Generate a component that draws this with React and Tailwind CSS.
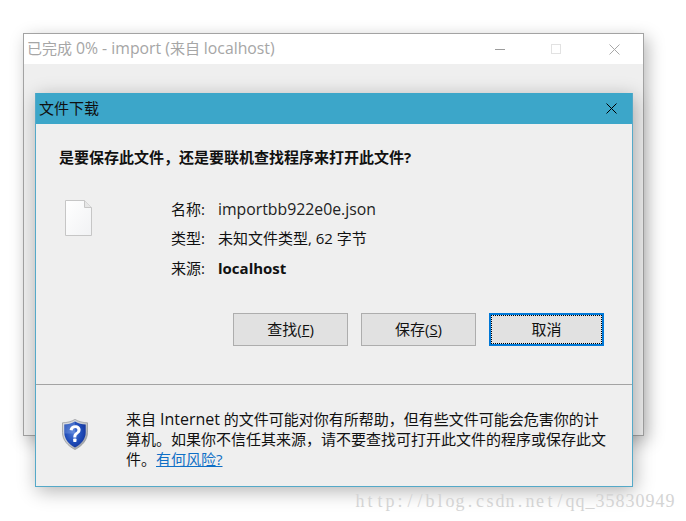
const FONT = '[font-family:"Open_Sans","Noto_Sans_CJK_SC",sans-serif]';
const WATERMARK = "http://blog.csdn.net/qq_35830949";

const CloseIcon = ({ color, className }) => (
  <svg width="11" height="11" viewBox="0 0 11 11" className={className}>
    <path d="M0.5 0.5L10.5 10.5M10.5 0.5L0.5 10.5" stroke={color} strokeWidth="1" fill="none" />
  </svg>
);

const FileIcon = () => (
  <svg width="27" height="36" viewBox="0 0 27 36">
    <defs>
      <linearGradient id="page" x1="0" y1="0" x2="1" y2="1">
        <stop offset="0" stopColor="#ffffff" />
        <stop offset="1" stopColor="#f1f2f4" />
      </linearGradient>
    </defs>
    <path d="M0.5 0.5H19.5L26.5 7.5V35.5H0.5Z" fill="url(#page)" stroke="#c6c6c6" />
    <path d="M19.5 0.5V7.5H26.5" fill="#e6e6e6" stroke="#c6c6c6" />
  </svg>
);

const ShieldIcon = () => (
  <svg width="26" height="31" viewBox="0 0 26 31">
    <defs>
      <linearGradient id="rim" x1="0" y1="0" x2="1" y2="1">
        <stop offset="0" stopColor="#dfe3e8" />
        <stop offset="0.55" stopColor="#c3c6ca" />
        <stop offset="1" stopColor="#8a8d92" />
      </linearGradient>
      <radialGradient id="blue" cx="0.42" cy="0.42" r="0.7">
        <stop offset="0" stopColor="#4f7ad8" />
        <stop offset="0.55" stopColor="#1f4cb8" />
        <stop offset="1" stopColor="#122f96" />
      </radialGradient>
    </defs>
    <path d="M13 0.4C9.5 2.6 5 3.7 0.5 3.8V13.5C0.5 21 5.8 26.8 13 30.6C20.2 26.8 25.5 21 25.5 13.5V3.8C21 3.7 16.5 2.6 13 0.4Z" fill="url(#rim)" stroke="#8f9297" strokeWidth="0.7" />
    <path d="M13 2.4C10 4.2 6 5.3 2.3 5.5V13.5C2.3 20 6.8 25.2 13 28.5C19.2 25.2 23.7 20 23.7 13.5V5.5C20 5.3 16 4.2 13 2.4Z" fill="url(#blue)" />
    <path d="M2.3 5.5C6 5.3 10 4.2 13 2.4V14.5H2.3Z" fill="#9fb9ee" fillOpacity="0.28" />
    <path d="M7.6 11C8 7.8 10.2 6.2 13.2 6.2C16.4 6.2 18.6 8 18.6 10.7C18.6 12.9 17.4 14 15.8 15.2C14.6 16.1 14.3 16.8 14.3 18.4H11.3C11.3 16 11.9 14.8 13.5 13.6C14.8 12.6 15.4 12 15.4 10.9C15.4 9.8 14.6 9 13.1 9C11.7 9 10.8 9.9 10.7 11.4Z" fill="#ffffff" />
    <rect x="11.2" y="19.6" width="3.3" height="3.3" rx="0.7" fill="#ffffff" />
  </svg>
);

const Row = ({ label, children }) => (
  <div className="flex h-[29.5px] items-center">
    <span className="w-[47px]">{label}</span>
    {children}
  </div>
);

const Btn = ({ children, focused }) => (
  <button
    className={
      focused
        ? "flex h-[33px] w-[115px] items-center justify-center border-2 border-[#0078d7] bg-[#e1e1e1] outline-1 -outline-offset-3 outline-dotted outline-black"
        : "flex h-[33px] w-[115px] items-center justify-center border border-[#adadad] bg-[#e1e1e1]"
    }
  >
    {children}
  </button>
);

export default function App() {
  return (
    <div className={`relative h-[521px] w-[686px] overflow-hidden bg-white text-[15px] leading-5 text-[#111] ${FONT}`}>
      {/* browser window behind the dialog */}
      <div className="absolute left-[23px] top-[33px] flex h-[403px] w-[621px] flex-col border border-[#a3a3a3] bg-[#efefef] shadow-[4px_5px_16px_rgba(0,0,0,0.28)]">
        <div className="flex h-[30px] items-center bg-white pb-[3px] pl-[3px] text-[#a6a6a6]">
          <span className="flex-1">
            已完成 <span className="text-[15.8px]">0% - import (</span>来自 <span className="text-[15.8px]">localhost)</span>
          </span>
          <span className="mr-[46px] mt-[3px] h-px w-[10px] bg-[#9c9c9c]" />
          <span className="mr-[48px] mt-[3px] h-[10px] w-[10px] border border-[#e2e2e2]" />
          <CloseIcon color="#a8a8a8" className="mr-[23px] mt-[3px]" />
        </div>
      </div>

      {/* file download dialog */}
      <div className="absolute left-[35px] top-[93px] flex h-[394px] w-[598px] flex-col border border-t-0 border-[#55a9c8] bg-[#efefef] shadow-[2px_4px_18px_rgba(0,0,0,0.3)]">
        <div className="flex h-[31px] shrink-0 items-center bg-[#3ca6c9] pb-[2px] pl-[3px] text-[#101010]">
          <span className="flex-1">文件下载</span>
          <CloseIcon color="#000000" className="mr-[15px] mt-[2px]" />
        </div>

        <div className="pl-[23px] pt-[23px] font-bold leading-5">是要保存此文件，还是要联机查找程序来打开此文件?</div>

        <div className="mt-[27px] flex">
          <div className="ml-[29px] mt-[6px] w-[106px]">
            <FileIcon />
          </div>
          <div className="flex flex-col">
            <Row label="名称:">
              <span className="text-[15.8px] text-[#222]">importbb922e0e.json</span>
            </Row>
            <Row label="类型:">
              <span>未知文件类型, 62 字节</span>
            </Row>
            <Row label="来源:">
              <span className="font-bold">localhost</span>
            </Row>
          </div>
        </div>

        <div className="mt-[30px] flex justify-end gap-[13px] pr-[28px]">
          <Btn>
            查找(<span className="underline">F</span>)
          </Btn>
          <Btn>
            保存(<span className="underline">S</span>)
          </Btn>
          <Btn focused>取消</Btn>
        </div>

        <div className="mt-[38px] h-px bg-[#a3a3a3]" />

        <div className="flex flex-1 items-start pt-[24px]">
          <div className="ml-[26px] w-[64px] pt-[10px]">
            <ShieldIcon />
          </div>
          <div className="whitespace-nowrap">
            <div>
              来自 <span className="text-[16px]">Internet</span> 的文件可能对你有所帮助，但有些文件可能会危害你的计
            </div>
            <div>算机。如果你不信任其来源，请不要查找可打开此文件的程序或保存此文</div>
            <div>
              件。<a className="text-[#0f6fc6] underline">有何风险?</a>
            </div>
          </div>
        </div>
      </div>

      {/* blog watermark, thin serif letters in fixed cells */}
      <div className='absolute left-[355px] top-[489px] flex font-["Liberation_Serif",serif] text-[18px] leading-6 text-[#d4d4d4]'>
        {WATERMARK.split("").map((ch, i) => (
          <span key={i} className="w-[10px] text-center">
            {ch}
          </span>
        ))}
      </div>
    </div>
  );
}
